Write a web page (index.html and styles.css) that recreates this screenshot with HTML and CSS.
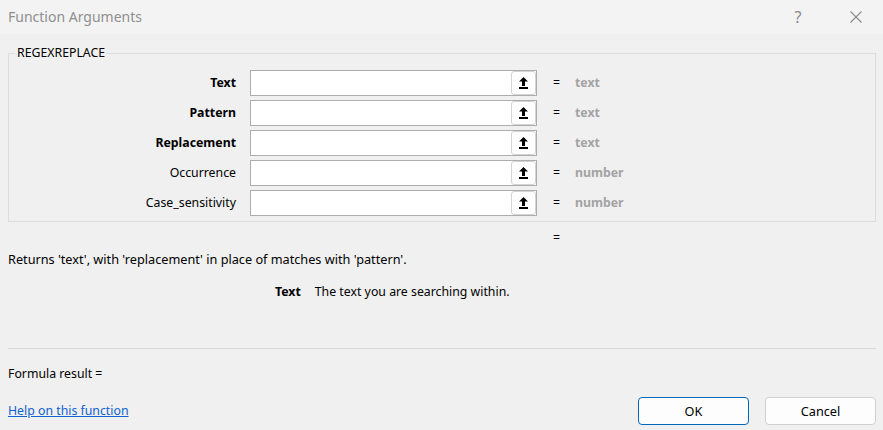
FILE: index.html
```html
<!DOCTYPE html>
<html>
<head>
<meta charset="utf-8">
<link rel="stylesheet" href="styles.css">
</head>
<body>
<div class="dialog">
  <div class="titlebar">
    <div class="title">Function Arguments</div>
    <div class="tb-help">?</div>
    <svg class="tb-close" width="12" height="12" viewBox="0 0 12 12"><path d="M0.5 0.5 L11.5 11.5 M11.5 0.5 L0.5 11.5" stroke="#8a8a8a" stroke-width="1.1" fill="none"/></svg>
  </div>
  <div class="main">
    <fieldset class="group">
      <legend>REGEXREPLACE</legend>
      <div class="row">
        <div class="label req">Text</div>
        <div class="field"><span class="pick"><svg width="9" height="12" viewBox="0 0 9 12"><path d="M4.5 0 L9 4.5 L6 4.5 L6 9 L3 9 L3 4.5 L0 4.5 Z M0 10 H9 V12 H0 Z" fill="#000"/></svg></span></div>
        <div class="eq">=</div><div class="val">text</div>
      </div>
      <div class="row">
        <div class="label req">Pattern</div>
        <div class="field"><span class="pick"><svg width="9" height="12" viewBox="0 0 9 12"><path d="M4.5 0 L9 4.5 L6 4.5 L6 9 L3 9 L3 4.5 L0 4.5 Z M0 10 H9 V12 H0 Z" fill="#000"/></svg></span></div>
        <div class="eq">=</div><div class="val">text</div>
      </div>
      <div class="row">
        <div class="label req">Replacement</div>
        <div class="field"><span class="pick"><svg width="9" height="12" viewBox="0 0 9 12"><path d="M4.5 0 L9 4.5 L6 4.5 L6 9 L3 9 L3 4.5 L0 4.5 Z M0 10 H9 V12 H0 Z" fill="#000"/></svg></span></div>
        <div class="eq">=</div><div class="val">text</div>
      </div>
      <div class="row">
        <div class="label">Occurrence</div>
        <div class="field"><span class="pick"><svg width="9" height="12" viewBox="0 0 9 12"><path d="M4.5 0 L9 4.5 L6 4.5 L6 9 L3 9 L3 4.5 L0 4.5 Z M0 10 H9 V12 H0 Z" fill="#000"/></svg></span></div>
        <div class="eq">=</div><div class="val">number</div>
      </div>
      <div class="row">
        <div class="label">Case_sensitivity</div>
        <div class="field"><span class="pick"><svg width="9" height="12" viewBox="0 0 9 12"><path d="M4.5 0 L9 4.5 L6 4.5 L6 9 L3 9 L3 4.5 L0 4.5 Z M0 10 H9 V12 H0 Z" fill="#000"/></svg></span></div>
        <div class="eq">=</div><div class="val">number</div>
      </div>
    </fieldset>
    <div class="result-eq">=</div>
    <div class="desc">Returns 'text', with 'replacement' in place of matches with 'pattern'.</div>
    <div class="arg-help"><b>Text</b><span>The text you are searching within.</span></div>
    <div class="sep"></div>
    <div class="formula">Formula result =</div>
    <div class="footer">
      <a class="link" href="#">Help on this function</a>
      <div class="buttons">
        <button class="btn primary">OK</button>
        <button class="btn">Cancel</button>
      </div>
    </div>
  </div>
</div>
</body>
</html>
```

FILE: styles.css
```css
html, body {
  margin: 0;
  padding: 0;
}
body {
  width: 883px;
  height: 430px;
  overflow: hidden;
  background: #f0f0f0;
  font-family: "Noto Sans", "Open Sans", sans-serif;
  font-size: 12.3px;
  line-height: 16px;
  color: #000;
}
.titlebar {
  height: 34px;
  display: flex;
  align-items: center;
  padding-left: 8px;
  background: #f3f3f3;
}
.title {
  flex: 1;
  font-size: 14px;
  color: #8f8f8f;
}
.tb-help {
  width: 20px;
  text-align: center;
  font-size: 16px;
  color: #8a8a8a;
  margin-right: 42px;
}
.tb-close {
  margin-right: 21px;
}
.main {
  padding: 0 7px 0 8px;
}
.group {
  margin: 11px 0 0 0;
  padding: 9px 0 5px 0;
  border: 1px solid #dcdcdc;
  min-width: 0;
}
.group legend {
  margin-left: 6px;
  padding: 0 2px;
  line-height: 16px;
}
.row {
  display: flex;
  align-items: center;
  height: 26px;
  margin-bottom: 4px;
}
.row:last-child {
  margin-bottom: 0;
}
.label {
  width: 227px;
  margin-right: 14px;
  text-align: right;
}
.label.req {
  font-weight: bold;
}
.field {
  width: 287px;
  height: 26px;
  box-sizing: border-box;
  border: 1px solid #adadad;
  background: #fff;
  display: flex;
  justify-content: flex-end;
  align-items: center;
}
.pick {
  width: 25px;
  height: 24px;
  box-sizing: border-box;
  border: 1px solid #d4d4d4;
  border-radius: 3px;
  background: #fff;
  display: flex;
  align-items: center;
  justify-content: center;
}
.eq {
  margin-left: 16px;
  width: 7px;
}
.val {
  margin-left: 15px;
  font-weight: bold;
  color: #a3a3a3;
}
.result-eq {
  margin: 8px 0 0 545px;
}
.desc {
  margin-top: 5px;
  font-size: 12.7px;
}
.arg-help {
  margin-top: 17px;
  padding-left: 267px;
  display: flex;
  gap: 14px;
}
.sep {
  margin-top: 48px;
  height: 1px;
  background: #dadada;
}
.formula {
  margin-top: 17px;
}
.footer {
  margin-top: 15px;
  display: flex;
  align-items: center;
  justify-content: space-between;
}
.link {
  color: #0f62cf;
  text-decoration: underline;
}
.buttons {
  display: flex;
  gap: 16px;
}
.btn {
  width: 111px;
  height: 28px;
  box-sizing: border-box;
  border: 1px solid #d0d0d0;
  border-radius: 4px;
  background: #fdfdfd;
  font-family: "Noto Sans", "Open Sans", sans-serif;
  font-size: 12.7px;
  color: #000;
  padding: 0;
}
.btn.primary {
  border-color: #0067c0;
}
```
